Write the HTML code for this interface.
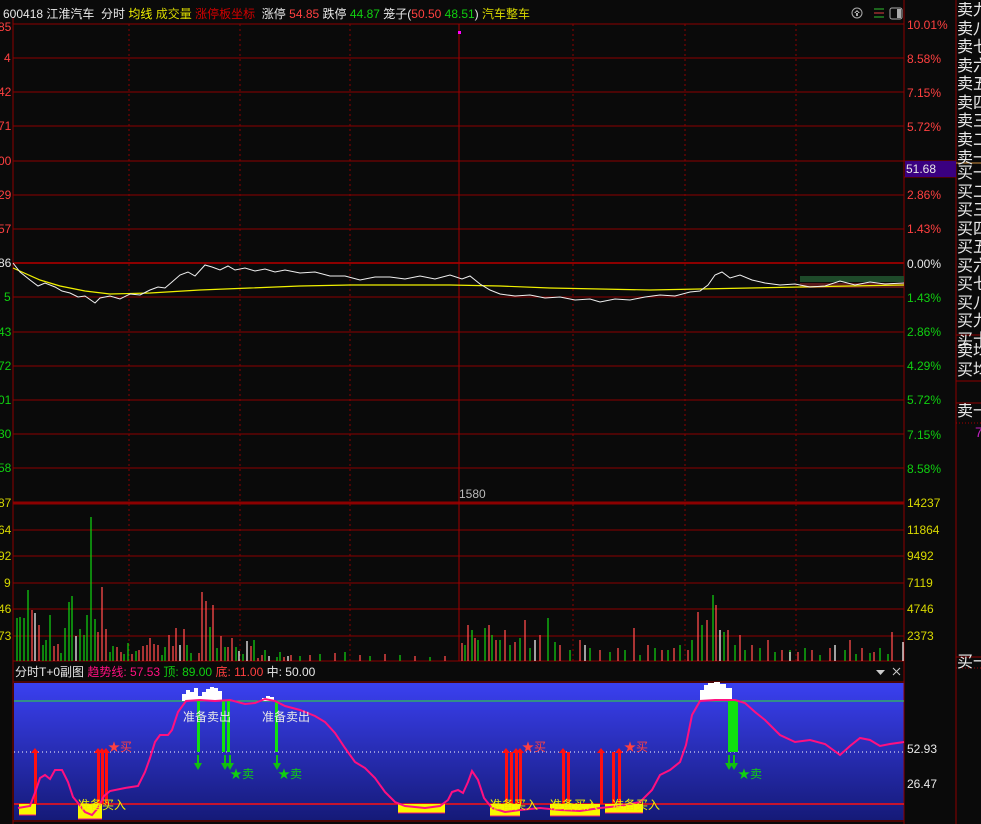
<!DOCTYPE html>
<html><head><meta charset="utf-8">
<style>
html,body{margin:0;padding:0;background:#0a0a0a;width:981px;height:824px;overflow:hidden}
body{position:relative;font-family:"Liberation Sans","WenQuanYi Zen Hei",sans-serif;font-size:12px;color:#ddd}
.t{position:absolute;white-space:nowrap;line-height:14px}
.r{color:#ff4040}.g{color:#10d010}.w{color:#e8e8e8}.y{color:#f0f000}.yy{color:#d8d800}.dr{color:#d00000}
.lab{position:absolute;white-space:nowrap;line-height:14px;font-size:12px}
.rp{position:absolute;left:957px;width:30px;color:#e8e8e8;font-size:16px;line-height:18.5px;white-space:nowrap;overflow:hidden}
</style></head><body>
<svg width="981" height="824" style="position:absolute;left:0;top:0">
<!-- sub panel bg -->
<defs><linearGradient id="bg" x1="0" y1="0" x2="0" y2="1"><stop offset="0" stop-color="#3a40f0"/><stop offset="1" stop-color="#151a78"/></linearGradient></defs>
<rect x="14" y="683" width="890" height="137" fill="url(#bg)"/>
<g stroke="#8c0000" stroke-width="1" fill="none">
<path d="M13 24H904M13 58H904M13 92H904M13 126H904M13 161H904M13 195H904M13 229H904M13 297H904M13 332H904M13 366H904M13 400H904M13 434H904M13 468H904"/>
<path d="M13 263H904" stroke-width="2"/>
<path d="M13 503H904" stroke-width="3"/>
<path d="M13 530H904M13 556H904M13 583H904M13 609H904M13 636H904M13 661H904"/>
<path d="M13 17V824M904 0V824M956 0V824M13 682H904M13 821H904"/>
<path d="M904 161H956M904 177H956M956 163H981M956 335H981M956 381H981M956 403H981M956 657H981"/>
<path d="M459 24V661" stroke="#a00000"/>
<path d="M129 24V661M240 24V661M350 24V661M573 24V661M685 24V661M796 24V661" stroke-dasharray="2,3"/>
</g>
<path d="M956 163H981" stroke="#d09040"/>
<path d="M956 423H981M956 668H981" stroke="#a00000" stroke-dasharray="1,2"/>
<rect x="905" y="161" width="51" height="16" fill="#3a0080"/>
<rect x="458" y="31" width="3" height="3" fill="#ff00ff"/>
<!-- price area bands -->
<rect x="800" y="276" width="104" height="6" fill="#1e4a2a"/>
<rect x="800" y="283" width="104" height="5" fill="#5a1a1a"/>
<polyline fill="none" stroke="#f0f000" stroke-width="1.2" points="13,268 40,280 60,286 85,291 110,294 150,293 200,290 250,288 300,286 350,285 400,285 450,285 500,286 550,288 600,289 650,290 700,289 750,288 800,287 850,286 904,285"/>
<polyline fill="none" stroke="#f0f0f0" stroke-width="1" points="13,263 20,272 30,280 38,286 45,283 55,287 62,291 70,293 78,297 85,296 95,303 100,298 110,296 120,299 130,294 140,295 150,290 158,287 165,288 172,282 180,275 188,272 195,276 205,265 212,267 220,270 228,266 235,270 245,268 255,271 265,269 275,272 285,270 300,273 315,272 330,276 345,276 360,280 375,277 390,277 405,279 420,276 435,279 450,275 462,279 470,276 480,284 490,290 500,294 515,296 530,295 545,298 560,297 575,300 590,299 600,302 615,299 630,300 645,297 660,295 675,296 690,292 700,291 708,285 715,275 722,272 730,278 740,275 752,280 765,283 780,285 795,284 810,287 825,286 840,281 855,285 870,282 885,284 904,283"/>
<!-- volume bars -->
<path stroke="#10c810" stroke-width="1.3" d="M17 618V661M20 617V661M24 618V661M28 590V661M43 645V661M46 640V661M50 615V661M61 653V661M65 628V661M69 602V661M72 596V661M80 629V661M84 635V661M87 615V661M91 517V661M95 619V661M110 652V661M113 646V661M124 654V661M128 643V661M136 651V661M162 655V661M165 647V661M187 645V661M191 653V661M210 627V661M217 648V661M225 647V661M236 647V661M243 654V661M254 640V661M265 650V661M277 657V661M280 652V661M300 656V661M320 654V661M345 652V661M370 656V661M400 655V661M430 657V661M465 645V661M472 630V661M478 640V661M485 628V661M492 635V661M500 640V661M510 645V661M520 638V661M530 648V661M548 618V661M555 642V661M570 650V661M590 648V661M610 652V661M625 650V661M640 655V661M655 648V661M668 650V661M680 645V661M692 640V661M702 625V661M713 595V661M724 632V661M735 645V661M745 650V661M760 648V661M775 652V661M790 650V661M805 648V661M820 655V661M845 650V661M856 654V661M870 653V661M880 648V661M888 654V661"/>
<path stroke="#ff4a4a" stroke-width="1.3" d="M32 610V661M39 625V661M54 646V661M58 644V661M98 632V661M102 587V661M106 629V661M117 647V661M121 652V661M132 654V661M139 650V661M143 646V661M147 645V661M150 638V661M154 644V661M158 645V661M169 635V661M173 646V661M176 628V661M184 629V661M199 653V661M202 592V661M206 601V661M213 605V661M221 636V661M228 647V661M232 638V661M251 646V661M258 658V661M262 655V661M284 657V661M291 655V661M310 655V661M335 653V661M360 655V661M385 654V661M415 656V661M445 656V661M462 643V661M468 625V661M475 638V661M489 625V661M496 640V661M505 630V661M515 642V661M525 620V661M540 635V661M560 645V661M580 640V661M600 650V661M618 648V661M634 628V661M648 645V661M662 650V661M674 648V661M688 650V661M698 612V661M707 620V661M716 605V661M728 630V661M740 635V661M752 645V661M768 640V661M782 650V661M798 652V661M812 650V661M830 648V661M850 640V661M862 648V661M874 652V661M892 632V661"/>
<path stroke="#f0f0f0" stroke-width="1.3" d="M35 613V661M76 636V661M180 645V661M239 651V661M247 641V661M269 656V661M288 656V661M535 640V661M585 645V661M720 630V661M790 652V661M835 645V661M903 642V661"/>
<!-- sub panel lines -->
<path d="M14 701H904" stroke="#30e030"/>
<path d="M14 752H904" stroke="#ffffff" stroke-dasharray="1,3"/>
<path d="M14 804H904" stroke="#ff1010" stroke-width="1.5"/>
<!-- yellow bars -->
<g fill="#f8f800">
<rect x="19" y="804" width="17" height="11"/><rect x="78" y="804" width="24" height="15"/>
<rect x="398" y="804" width="47" height="9"/><rect x="490" y="804" width="30" height="12"/>
<rect x="550" y="804" width="50" height="12"/><rect x="605" y="804" width="38" height="9"/>
</g>
<g stroke="#ff1070" stroke-width="1" fill="none">
<path d="M19 815H36M78 819H102M398 813H445M490 816H520M550 816H600M605 813H643"/>
</g>
<!-- white top bars -->
<g fill="#ffffff">
<path d="M182 701V694H186V690H190V692H194V688H198V696H202V692H206V689H210V687H214V688H218V691H222V701Z"/>
<path d="M262 701V698H266V696H270V697H274V701Z"/>
<path d="M700 701V690H704V685H708V683H714V682H720V684H726V688H732V701Z"/>
</g>
<!-- green bars -->
<g fill="#10e010"><rect x="197" y="701" width="3" height="51"/><rect x="222" y="701" width="3" height="51"/><rect x="227" y="701" width="3" height="51"/><rect x="275" y="701" width="3" height="51"/><rect x="728" y="701" width="10" height="51"/></g>
<g fill="#10c010"><path d="M194 763h8l-4 7z"/><path d="M221 763h8l-4 7z"/><path d="M226 763h8l-4 7z"/><path d="M273 763h8l-4 7z"/><path d="M725 763h8l-4 7z"/><path d="M730 763h8l-4 7z"/><path d="M197 755h2v9h-2zM224 755h2v9h-2zM229 755h2v9h-2zM276 755h2v9h-2zM728 755h2v9h-2zM733 755h2v9h-2z"/></g>
<!-- red bars -->
<g fill="#ff1010"><rect x="34" y="752" width="3" height="52"/><rect x="97" y="752" width="3" height="52"/><rect x="101" y="752" width="3" height="52"/><rect x="105" y="752" width="3" height="52"/>
<rect x="505" y="752" width="3" height="52"/><rect x="510" y="752" width="3" height="52"/><rect x="515" y="752" width="3" height="52"/><rect x="519" y="752" width="3" height="52"/>
<rect x="562" y="752" width="3" height="52"/><rect x="567" y="752" width="3" height="52"/>
<rect x="600" y="752" width="3" height="52"/><rect x="612" y="752" width="3" height="52"/><rect x="618" y="752" width="3" height="52"/>
<path d="M31 753l4-5 4 5zM94 753l4-5 4 5zM98 753l4-5 4 5zM102 753l4-5 4 5zM502 753l4-5 4 5zM512 753l4-5 4 5zM516 753l4-5 4 5zM559 753l4-5 4 5zM597 753l4-5 4 5zM615 753l4-5 4 5z"/></g>
<polyline fill="none" stroke="#ff1080" stroke-width="2" points="18,808 30,806 36,790 40,778 45,775 50,779 55,770 62,770 68,782 73,797 78,803 85,812 92,815 98,808 104,796 110,791 125,788 138,786 145,772 150,758 155,742 160,735 168,735 172,730 178,712 186,701 200,700 215,701 230,700 245,704 255,703 265,699 275,701 285,706 300,710 315,716 325,722 335,733 345,748 355,762 365,768 375,778 385,792 395,802 405,806 425,808 440,806 448,800 452,792 458,790 463,793 468,782 472,771 478,780 484,798 492,808 505,812 520,810 540,808 560,810 580,811 600,808 620,806 640,802 652,790 660,775 670,770 680,762 686,745 692,715 700,701 715,700 735,700 745,703 755,712 765,720 780,735 795,742 810,740 825,744 840,755 850,746 860,738 870,740 880,746 890,744 904,742"/>
<!-- icons top right -->
<g stroke="#aaa" fill="none"><circle cx="857" cy="13" r="5"/><rect x="890" y="8" width="12" height="11" rx="2"/></g>
<path d="M857 10l-3 3h6zM856 12h2v4h-2z" fill="#aaa"/><rect x="897" y="9" width="4" height="9" fill="#aaa"/>
<path d="M874 9h10M874 13h10M874 17h10" stroke="#30c030"/><path d="M874 13h10" stroke="#e04040"/>
<path d="M876 670h9l-4.5 5z" fill="#ccc"/><path d="M893 668l7 7M900 668l-7 7" stroke="#ccc"/>
</svg>

<div class="t" style="left:3px;top:7px"><span class="w">600418 江淮汽车&nbsp;&nbsp;分时</span> <span class="y">均线</span> <span class="yy">成交量</span> <span class="dr">涨停板坐标</span>&nbsp; <span class="w">涨停</span> <span class="r">54.85</span> <span class="w">跌停</span> <span class="g">44.87</span> <span class="w">笼子(</span><span class="r">50.50</span> <span class="g">48.51</span><span class="w">)</span> <span class="yy">汽车整车</span></div>

<!-- left axis -->
<div class="lab r" style="left:-2px;top:20px">85</div>
<div class="lab r" style="left:4px;top:51px">4</div>
<div class="lab r" style="left:-2px;top:85px">42</div>
<div class="lab r" style="left:-2px;top:119px">71</div>
<div class="lab r" style="left:-2px;top:154px">00</div>
<div class="lab r" style="left:-2px;top:188px">29</div>
<div class="lab r" style="left:-2px;top:222px">57</div>
<div class="lab w" style="left:-2px;top:256px">86</div>
<div class="lab g" style="left:4px;top:290px">5</div>
<div class="lab g" style="left:-2px;top:325px">43</div>
<div class="lab g" style="left:-2px;top:359px">72</div>
<div class="lab g" style="left:-2px;top:393px">01</div>
<div class="lab g" style="left:-2px;top:427px">30</div>
<div class="lab g" style="left:-2px;top:461px">58</div>
<div class="lab yy" style="left:-2px;top:496px">87</div>
<div class="lab yy" style="left:-2px;top:523px">64</div>
<div class="lab yy" style="left:-2px;top:549px">92</div>
<div class="lab yy" style="left:4px;top:576px">9</div>
<div class="lab yy" style="left:-2px;top:602px">46</div>
<div class="lab yy" style="left:-2px;top:629px">73</div>

<!-- right axis -->
<div class="lab r" style="left:907px;top:18px">10.01%</div>
<div class="lab r" style="left:907px;top:52px">8.58%</div>
<div class="lab r" style="left:907px;top:86px">7.15%</div>
<div class="lab r" style="left:907px;top:120px">5.72%</div>
<div class="lab w" style="left:906px;top:162px">51.68</div>
<div class="lab r" style="left:907px;top:188px">2.86%</div>
<div class="lab r" style="left:907px;top:222px">1.43%</div>
<div class="lab w" style="left:907px;top:257px">0.00%</div>
<div class="lab g" style="left:907px;top:291px">1.43%</div>
<div class="lab g" style="left:907px;top:325px">2.86%</div>
<div class="lab g" style="left:907px;top:359px">4.29%</div>
<div class="lab g" style="left:907px;top:393px">5.72%</div>
<div class="lab g" style="left:907px;top:428px">7.15%</div>
<div class="lab g" style="left:907px;top:462px">8.58%</div>
<div class="lab yy" style="left:907px;top:496px">14237</div>
<div class="lab yy" style="left:907px;top:523px">11864</div>
<div class="lab yy" style="left:907px;top:549px">9492</div>
<div class="lab yy" style="left:907px;top:576px">7119</div>
<div class="lab yy" style="left:907px;top:602px">4746</div>
<div class="lab yy" style="left:907px;top:629px">2373</div>
<div class="lab w" style="left:907px;top:742px">52.93</div>
<div class="lab w" style="left:907px;top:777px">26.47</div>
<div class="lab" style="left:459px;top:487px;color:#bbb">1580</div>

<!-- sub header -->
<div class="t" style="left:15px;top:665px"><span class="w">分时T+0副图</span> <span style="color:#ff1080">趋势线: 57.53</span> <span class="g">顶: 89.00</span> <span class="r">底: 11.00</span> <span class="w">中: 50.00</span></div>
<div class="t w" style="left:183px;top:710px">准备卖出</div>
<div class="t w" style="left:262px;top:710px">准备卖出</div>
<div class="t g" style="left:230px;top:767px">★卖</div>
<div class="t g" style="left:278px;top:767px">★卖</div>
<div class="t g" style="left:738px;top:767px">★卖</div>
<div class="t r" style="left:108px;top:740px">★买</div>
<div class="t r" style="left:522px;top:740px">★买</div>
<div class="t r" style="left:624px;top:740px">★买</div>
<div class="t y" style="left:78px;top:798px">准备买入</div>
<div class="t y" style="left:490px;top:798px">准备买入</div>
<div class="t y" style="left:550px;top:798px">准备买入</div>
<div class="t y" style="left:612px;top:798px">准备买入</div>

<!-- right panel -->
<div class="rp" style="top:2px">卖九<br>卖八<br>卖七<br>卖六<br>卖五<br>卖四<br>卖三<br>卖二<br>卖一</div>
<div class="rp" style="top:165px">买一<br>买二<br>买三<br>买四<br>买五<br>买六<br>买七<br>买八<br>买九<br>买十</div>
<div class="rp" style="top:343px">卖均<br>买均</div>
<div class="rp" style="top:403px">卖一</div>
<div class="rp" style="top:654px">买一</div>
<div class="lab" style="left:975px;top:425px;color:#c020c0;font-size:14px">7</div>
</body></html>
